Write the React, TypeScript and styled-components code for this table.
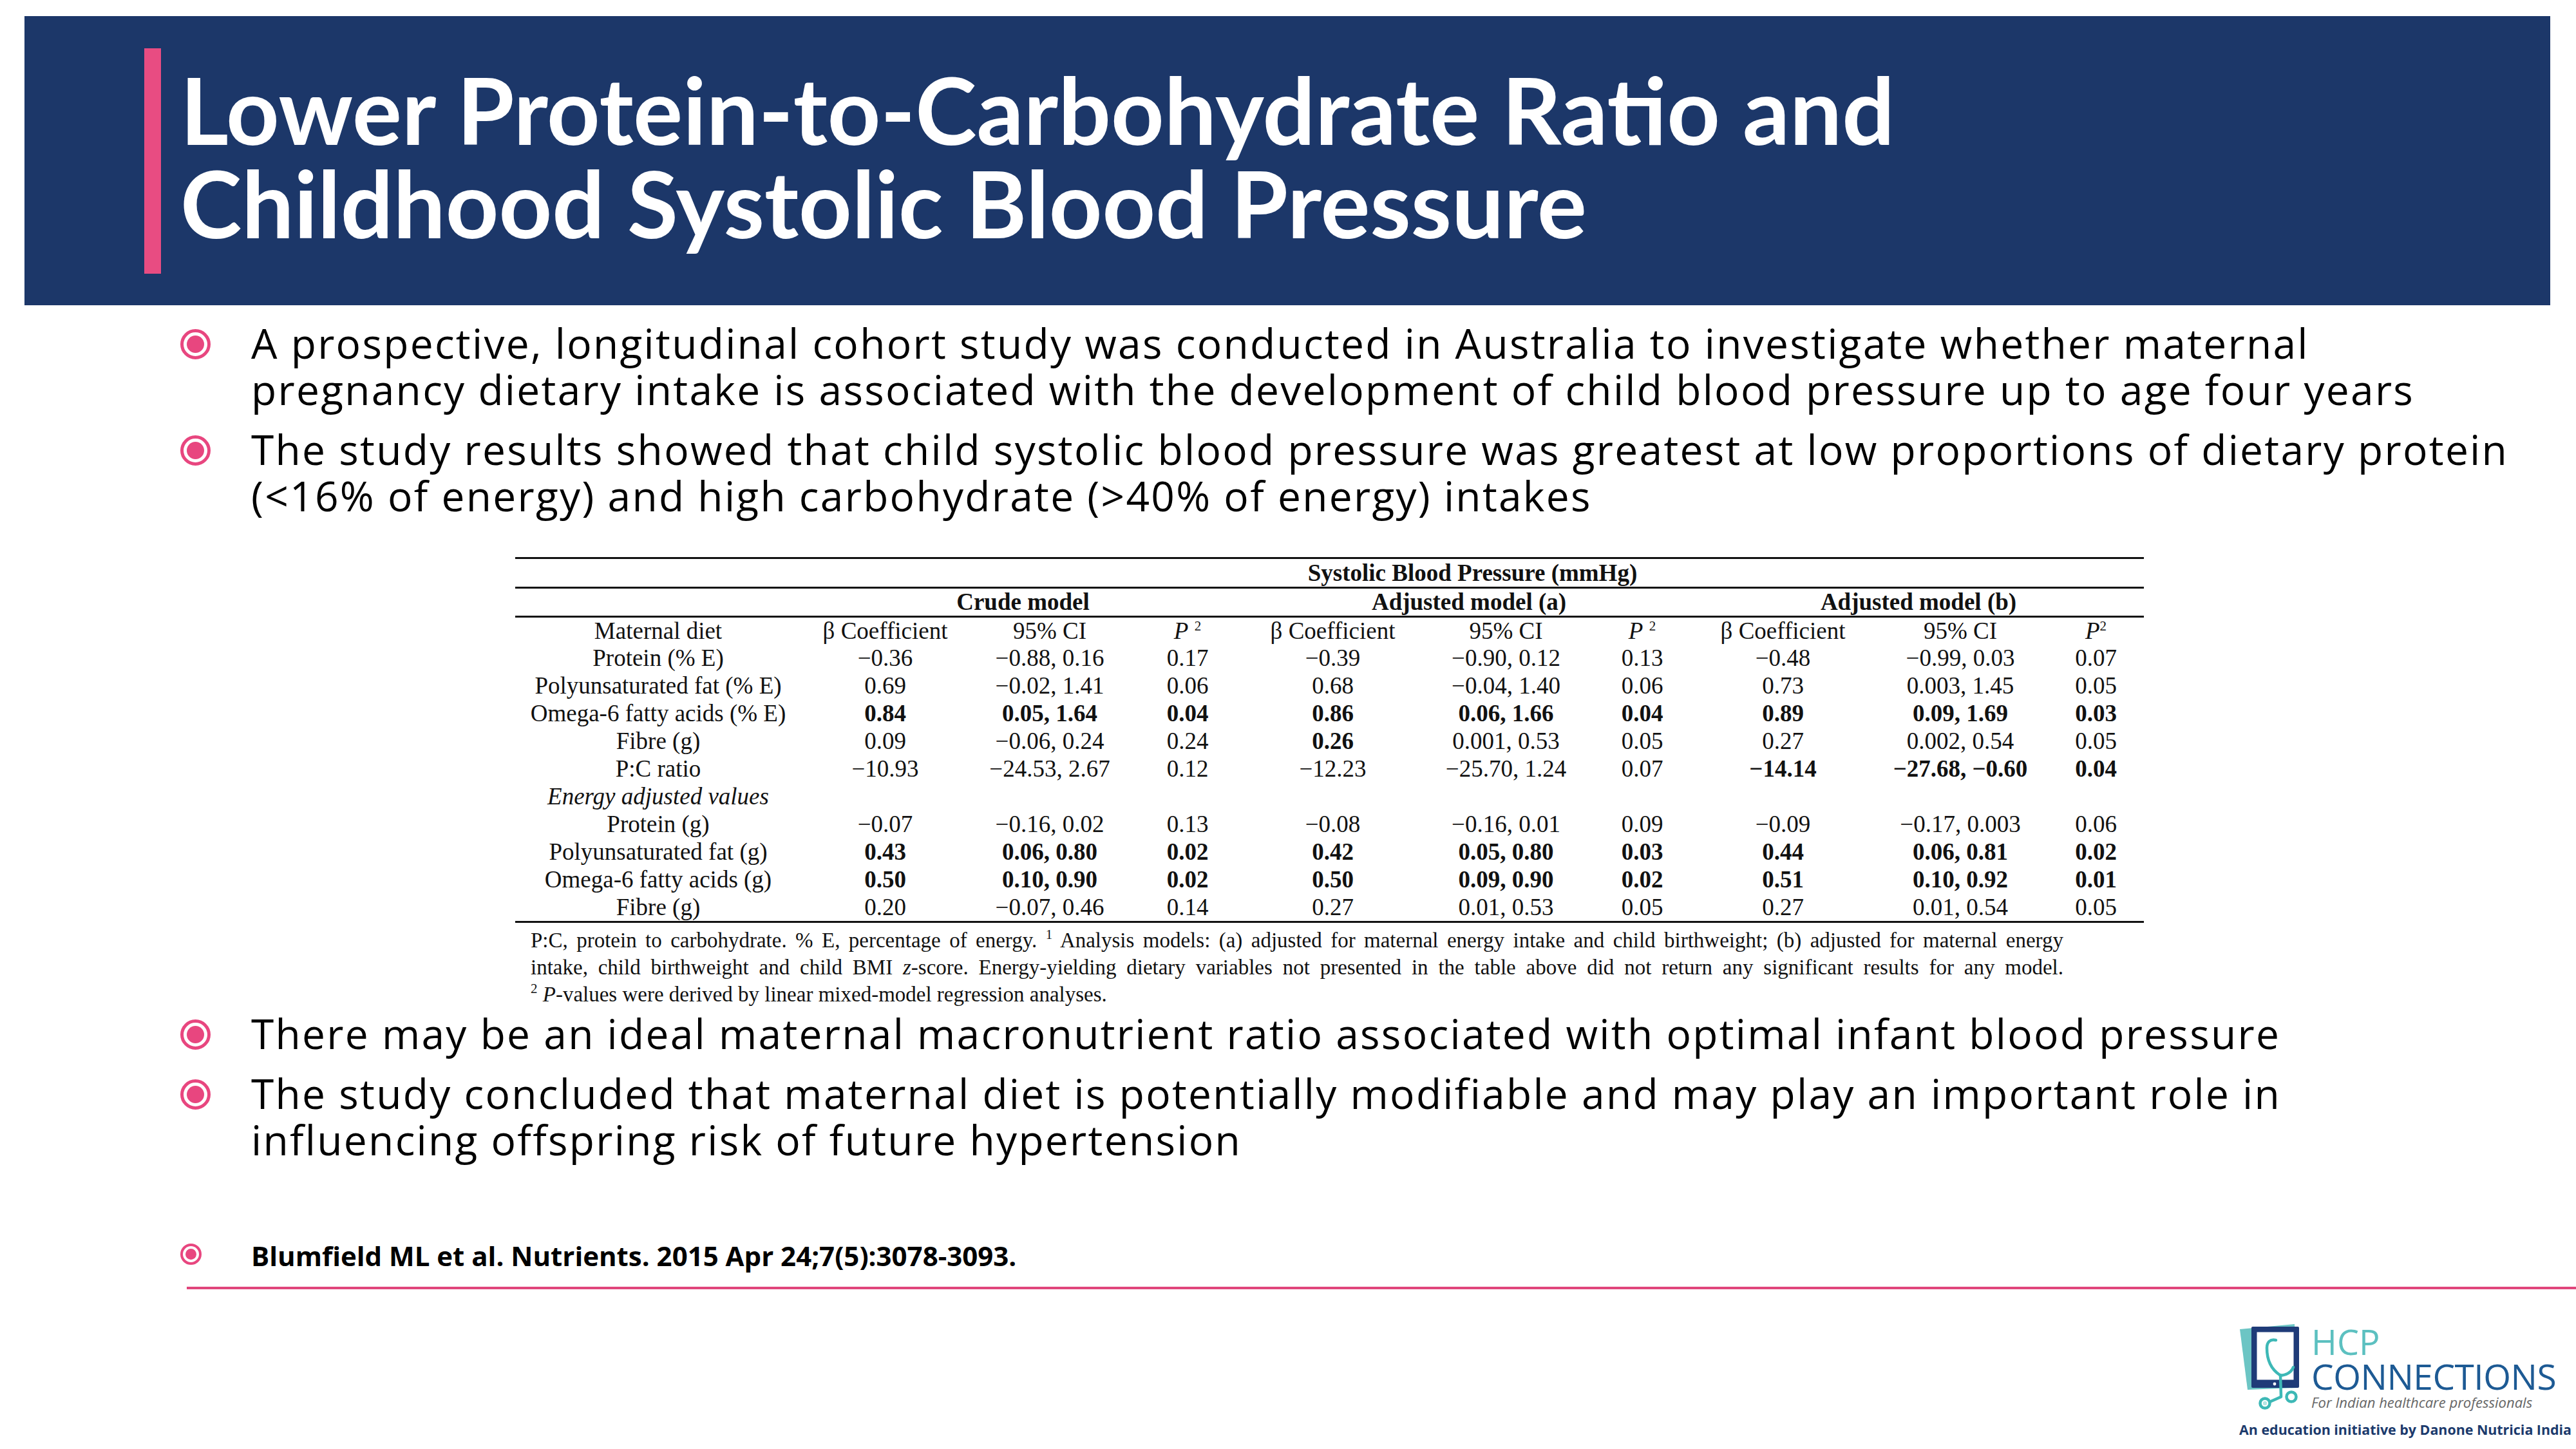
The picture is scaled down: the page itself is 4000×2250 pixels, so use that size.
import styled, { createGlobalStyle } from 'styled-components';

const GlobalStyle = createGlobalStyle`
  html, body {
    margin: 0;
    padding: 0;
    background: #ffffff;
  }
`;

const PINK = '#e8467f';
const NAVY = '#1c3769';

const Slide = styled.div`
  width: 4000px;
  height: 2250px;
  background: #ffffff;
  display: flex;
  flex-direction: column;
  overflow: hidden;
`;

const Header = styled.header`
  margin: 25px 40px 0 38px;
  height: 449px;
  box-sizing: border-box;
  padding: 50px 0 0 186px;
  background: ${NAVY};
  display: flex;
  align-items: flex-start;
`;

const PinkBar = styled.div`
  width: 26px;
  height: 350px;
  background: #e84c82;
  flex: none;
`;

const Title = styled.h1`
  margin: 22px 0 0 30px;
  font-family: Lato, 'Open Sans', sans-serif;
  font-weight: 700;
  font-size: 144px;
  line-height: 145px;
  color: #ffffff;
  white-space: nowrap;
`;

const Content = styled.main`
  padding-left: 280px;
  display: flex;
  flex-direction: column;
`;

const Item = styled.div<{ $top: number }>`
  display: flex;
  align-items: flex-start;
  margin-top: ${({ $top }) => $top}px;
`;

const Bullet = styled.span<{ $size: number; $ring: number; $offset: number; $gap: number }>`
  flex: none;
  box-sizing: border-box;
  width: ${({ $size }) => $size}px;
  height: ${({ $size }) => $size}px;
  margin: ${({ $offset }) => $offset}px ${({ $gap }) => $gap}px 0 0;
  border: ${({ $ring }) => $ring}px solid ${PINK};
  border-radius: 50%;
  display: flex;
  align-items: center;
  justify-content: center;

  &::after {
    content: '';
    width: ${({ $size, $ring }) => $size - $ring * 4}px;
    height: ${({ $size, $ring }) => $size - $ring * 4}px;
    border-radius: 50%;
    background: ${PINK};
  }
`;

const ItemText = styled.p`
  margin: 0;
  font-family: 'Open Sans', sans-serif;
  font-size: 64px;
  line-height: 72px;
  letter-spacing: 2.3px;
  color: #000000;
  white-space: nowrap;
`;

const Reference = styled.p`
  margin: 0;
  font-family: 'Open Sans', sans-serif;
  font-weight: 700;
  font-size: 42px;
  line-height: 50px;
  color: #000000;
  white-space: nowrap;
`;

const Figure = styled.div`
  margin: 59px 0 0 520px;
  width: 2529px;
  font-family: 'Liberation Serif', 'Times New Roman', serif;
  color: #111111;
`;

const Table = styled.table`
  width: 2529px;
  table-layout: fixed;
  border-collapse: collapse;
  font-size: 37px;
`;

const Row = styled.tr<{ $rule?: boolean; $topRule?: boolean; $h: number }>`
  height: ${({ $h }) => $h}px;
  border-top: ${({ $topRule }) => ($topRule ? '3px solid #111' : 'none')};
  border-bottom: ${({ $rule }) => ($rule ? '3px solid #111' : 'none')};
`;

const Cell = styled.td<{ $bold?: boolean; $italic?: boolean }>`
  padding: 0;
  text-align: center;
  vertical-align: middle;
  white-space: nowrap;
  line-height: 40px;
  font-weight: ${({ $bold }) => ($bold ? 700 : 400)};
  font-style: ${({ $italic }) => ($italic ? 'italic' : 'normal')};
`;

const Sup = styled.sup`
  font-size: 21px;
  font-style: normal;
  vertical-align: 13px;
  line-height: 0;
`;

const FootLine = styled.div<{ $fill?: boolean }>`
  margin-left: 24px;
  width: 2380px;
  font-size: 33px;
  line-height: 42px;
  white-space: nowrap;
  text-align: ${({ $fill }) => ($fill ? 'justify' : 'left')};
  text-align-last: ${({ $fill }) => ($fill ? 'justify' : 'left')};
`;

const Footnotes = styled.div`
  margin-top: 6px;
`;

const PinkRule = styled.div`
  margin: 23px 0 0 290px;
  height: 4px;
  background: #e0467c;
`;

const Footer = styled.footer`
  display: flex;
  justify-content: flex-end;
  padding-right: 7px;
  margin-top: 53px;
`;

const Logo = styled.div`
  display: flex;
  flex-direction: column;
  align-items: flex-start;
`;

const LogoTop = styled.div`
  display: flex;
  align-items: flex-start;
  margin-left: -2px;
`;

const LogoWords = styled.div`
  display: flex;
  flex-direction: column;
  margin: 2px 0 0 14px;
  font-family: 'Open Sans', sans-serif;
`;

const Hcp = styled.span`
  font-size: 54px;
  line-height: 52px;
  color: #5cc0c0;
`;

const Connections = styled.span`
  font-size: 55px;
  line-height: 55px;
  color: #1d5a94;
  letter-spacing: -0.5px;
`;

const Tagline = styled.span`
  font-size: 22px;
  line-height: 26px;
  font-style: italic;
  color: #666666;
  white-space: nowrap;
`;

const Initiative = styled.span`
  margin-top: 16px;
  font-family: 'Open Sans', sans-serif;
  font-weight: 700;
  font-size: 21.4px;
  line-height: 24px;
  color: #1c3a6c;
  white-space: nowrap;
`;

type DataRow = { label: string; vals: string[]; bold?: number[] };

const ALL = [0, 1, 2, 3, 4, 5, 6, 7, 8];

const upper: DataRow[] = [
  { label: 'Protein (% E)', vals: ['−0.36', '−0.88, 0.16', '0.17', '−0.39', '−0.90, 0.12', '0.13', '−0.48', '−0.99, 0.03', '0.07'] },
  { label: 'Polyunsaturated fat (% E)', vals: ['0.69', '−0.02, 1.41', '0.06', '0.68', '−0.04, 1.40', '0.06', '0.73', '0.003, 1.45', '0.05'] },
  { label: 'Omega-6 fatty acids (% E)', vals: ['0.84', '0.05, 1.64', '0.04', '0.86', '0.06, 1.66', '0.04', '0.89', '0.09, 1.69', '0.03'], bold: ALL },
  { label: 'Fibre (g)', vals: ['0.09', '−0.06, 0.24', '0.24', '0.26', '0.001, 0.53', '0.05', '0.27', '0.002, 0.54', '0.05'], bold: [3] },
  { label: 'P:C ratio', vals: ['−10.93', '−24.53, 2.67', '0.12', '−12.23', '−25.70, 1.24', '0.07', '−14.14', '−27.68, −0.60', '0.04'], bold: [6, 7, 8] },
];

const lower: DataRow[] = [
  { label: 'Protein (g)', vals: ['−0.07', '−0.16, 0.02', '0.13', '−0.08', '−0.16, 0.01', '0.09', '−0.09', '−0.17, 0.003', '0.06'] },
  { label: 'Polyunsaturated fat (g)', vals: ['0.43', '0.06, 0.80', '0.02', '0.42', '0.05, 0.80', '0.03', '0.44', '0.06, 0.81', '0.02'], bold: ALL },
  { label: 'Omega-6 fatty acids (g)', vals: ['0.50', '0.10, 0.90', '0.02', '0.50', '0.09, 0.90', '0.02', '0.51', '0.10, 0.92', '0.01'], bold: ALL },
  { label: 'Fibre (g)', vals: ['0.20', '−0.07, 0.46', '0.14', '0.27', '0.01, 0.53', '0.05', '0.27', '0.01, 0.54', '0.05'] },
];

const COLS = [444, 261, 250, 178, 273, 265, 158, 279, 272, 149];

function DietRow({ row, last }: { row: DataRow; last?: boolean }) {
  return (
    <Row $h={last ? 44 : 43} $rule={last}>
      <Cell>{row.label}</Cell>
      {row.vals.map((v, i) => (
        <Cell key={i} $bold={row.bold?.includes(i)}>
          {v}
        </Cell>
      ))}
    </Row>
  );
}

function PHead() {
  return (
    <Cell>
      <i>P</i> <Sup>2</Sup>
    </Cell>
  );
}

function ResultsTable() {
  return (
    <Figure>
      <Table>
        <colgroup>
          {COLS.map((w, i) => (
            <col key={i} style={{ width: w }} />
          ))}
        </colgroup>
        <tbody>
          <Row $h={46} $topRule $rule>
            <Cell />
            <Cell colSpan={9} $bold>
              Systolic Blood Pressure (mmHg)
            </Cell>
          </Row>
          <Row $h={45} $rule>
            <Cell />
            <Cell colSpan={3} $bold>Crude model</Cell>
            <Cell colSpan={3} $bold>Adjusted model (a)</Cell>
            <Cell colSpan={3} $bold>Adjusted model (b)</Cell>
          </Row>
          <Row $h={43}>
            <Cell>Maternal diet</Cell>
            <Cell>β Coefficient</Cell>
            <Cell>95% CI</Cell>
            <PHead />
            <Cell>β Coefficient</Cell>
            <Cell>95% CI</Cell>
            <PHead />
            <Cell>β Coefficient</Cell>
            <Cell>95% CI</Cell>
            <Cell>
              <i>P</i>
              <Sup>2</Sup>
            </Cell>
          </Row>
          {upper.map((r) => (
            <DietRow key={r.label} row={r} />
          ))}
          <Row $h={43}>
            <Cell $italic>Energy adjusted values</Cell>
            <Cell colSpan={9} />
          </Row>
          {lower.map((r, i) => (
            <DietRow key={r.label + i} row={r} last={i === lower.length - 1} />
          ))}
        </tbody>
      </Table>
      <Footnotes>
        <FootLine $fill>
          P:C, protein to carbohydrate. % E, percentage of energy. <Sup>1</Sup> Analysis models: (a) adjusted for
          maternal energy intake and child birthweight; (b) adjusted for maternal energy
        </FootLine>
        <FootLine $fill>
          intake, child birthweight and child BMI <i>z</i>-score. Energy-yielding dietary variables not presented in the
          table above did not return any significant results for any model.
        </FootLine>
        <FootLine>
          <Sup>2</Sup> <i>P</i>-values were derived by linear mixed-model regression analyses.
        </FootLine>
      </Footnotes>
    </Figure>
  );
}

function LogoMark() {
  return (
    <svg width="100" height="140" viewBox="20 15 100 140" style={{ marginTop: -3 }}>
      <polygon points="23,27 108,19 112,118 35,121" fill="#6cc5c4" />
      <rect x="41" y="23" width="74" height="95" rx="2" fill="#1f3b78" />
      <rect x="49.5" y="31.5" width="57" height="74" fill="#ffffff" />
      <circle cx="77" cy="112" r="2.4" fill="#ffffff" />
      <g fill="none" stroke="#3db8b6" strokeWidth="4.5" strokeLinecap="round">
        <path d="M79 44 C70 42 65 47 65 56 C65 72 70 88 85 98" />
        <path d="M106 86 C103 94 95 98 86 99" />
        <path d="M86 98 L87 131" />
        <circle cx="103" cy="132" r="7.5" />
        <path d="M87 132 L69 140" />
      </g>
      <circle cx="62" cy="142" r="7.5" fill="#ffffff" stroke="#3db8b6" strokeWidth="4.5" />
      <circle cx="62" cy="142" r="3.2" fill="#b7e6e4" />
    </svg>
  );
}

export default function App() {
  return (
    <>
      <GlobalStyle />
      <Slide>
        <Header>
          <PinkBar />
          <Title>
            Lower Protein-to-Carbohydrate Ratio and
            <br />
            Childhood Systolic Blood Pressure
          </Title>
        </Header>

        <Content>
          <Item $top={23}>
            <Bullet $size={47} $ring={5} $offset={14} $gap={63} />
            <ItemText>
              A prospective, longitudinal cohort study was conducted in Australia to investigate whether maternal
              <br />
              pregnancy dietary intake is associated with the development of child blood pressure up to age four years
            </ItemText>
          </Item>
          <Item $top={21}>
            <Bullet $size={47} $ring={5} $offset={14} $gap={63} />
            <ItemText>
              The study results showed that child systolic blood pressure was greatest at low proportions of dietary protein
              <br />
              (&lt;16% of energy) and high carbohydrate (&gt;40% of energy) intakes
            </ItemText>
          </Item>

          <ResultsTable />

          <Item $top={4}>
            <Bullet $size={47} $ring={5} $offset={14} $gap={63} />
            <ItemText>There may be an ideal maternal macronutrient ratio associated with optimal infant blood pressure</ItemText>
          </Item>
          <Item $top={21}>
            <Bullet $size={47} $ring={5} $offset={14} $gap={63} />
            <ItemText>
              The study concluded that maternal diet is potentially modifiable and may play an important role in
              <br />
              influencing offspring risk of future hypertension
            </ItemText>
          </Item>

          <Item $top={119}>
            <Bullet $size={33} $ring={4} $offset={6} $gap={77} />
            <Reference>Blumfield ML et al. Nutrients. 2015 Apr 24;7(5):3078-3093.</Reference>
          </Item>
        </Content>

        <PinkRule />

        <Footer>
          <Logo>
            <LogoTop>
              <LogoMark />
              <LogoWords>
                <Hcp>HCP</Hcp>
                <Connections>CONNECTIONS</Connections>
                <Tagline>For Indian healthcare professionals</Tagline>
              </LogoWords>
            </LogoTop>
            <Initiative>An education initiative by Danone Nutricia India</Initiative>
          </Logo>
        </Footer>
      </Slide>
    </>
  );
}
